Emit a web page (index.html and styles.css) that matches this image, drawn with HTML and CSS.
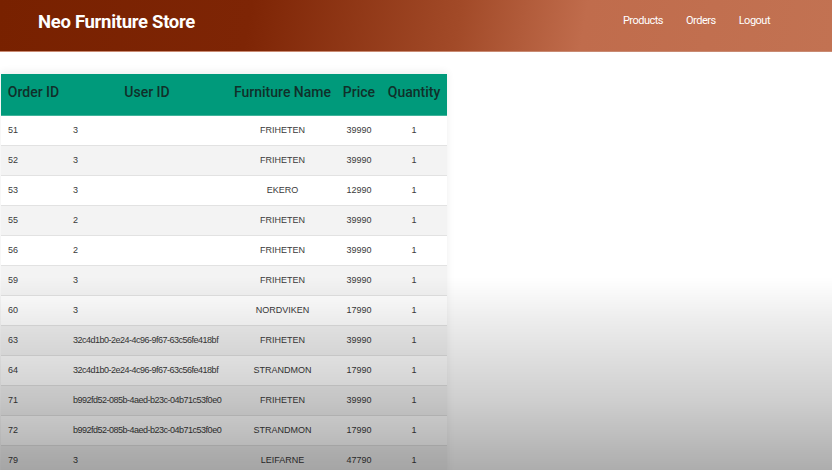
FILE: index.html
```html
<!DOCTYPE html>
<html lang="en">

<head>
	<meta charset="UTF-8">
	<title>Neo Furniture Store - Orders</title>
	<link rel="stylesheet" href="styles.css">
</head>

<body>
	<div class="navbar">
		<h1 class="brand">Neo Furniture Store</h1>
		<div class="nav_links">
			<a href="#" class="nav_link">Products</a>
			<a href="#" class="nav_link">Orders</a>
			<a href="#" class="nav_link">Logout</a>
		</div>
	</div>

	<table class="orders_table">
		<colgroup>
			<col class="col_order">
			<col class="col_user">
			<col class="col_name">
			<col class="col_price">
			<col class="col_qty">
		</colgroup>
		<thead>
			<tr>
				<th>Order ID</th>
				<th>User ID</th>
				<th>Furniture Name</th>
				<th>Price</th>
				<th>Quantity</th>
			</tr>
		</thead>
		<tbody>
			<tr><td class="left">51</td><td class="left">3</td><td>FRIHETEN</td><td>39990</td><td>1</td></tr>
			<tr><td class="left">52</td><td class="left">3</td><td>FRIHETEN</td><td>39990</td><td>1</td></tr>
			<tr><td class="left">53</td><td class="left">3</td><td>EKERO</td><td>12990</td><td>1</td></tr>
			<tr><td class="left">55</td><td class="left">2</td><td>FRIHETEN</td><td>39990</td><td>1</td></tr>
			<tr><td class="left">56</td><td class="left">2</td><td>FRIHETEN</td><td>39990</td><td>1</td></tr>
			<tr><td class="left">59</td><td class="left">3</td><td>FRIHETEN</td><td>39990</td><td>1</td></tr>
			<tr><td class="left">60</td><td class="left">3</td><td>NORDVIKEN</td><td>17990</td><td>1</td></tr>
			<tr><td class="left">63</td><td class="left uuid">32c4d1b0-2e24-4c96-9f67-63c56fe418bf</td><td>FRIHETEN</td><td>39990</td><td>1</td></tr>
			<tr><td class="left">64</td><td class="left uuid">32c4d1b0-2e24-4c96-9f67-63c56fe418bf</td><td>STRANDMON</td><td>17990</td><td>1</td></tr>
			<tr><td class="left">71</td><td class="left uuid">b992fd52-085b-4aed-b23c-04b71c53f0e0</td><td>FRIHETEN</td><td>39990</td><td>1</td></tr>
			<tr><td class="left">72</td><td class="left uuid">b992fd52-085b-4aed-b23c-04b71c53f0e0</td><td>STRANDMON</td><td>17990</td><td>1</td></tr>
			<tr><td class="left">79</td><td class="left">3</td><td>LEIFARNE</td><td>47790</td><td>1</td></tr>
		</tbody>
	</table>

	<div class="shade"></div>
</body>

</html>
```

FILE: styles.css
```css
* {
	box-sizing: border-box;
}

body {
	margin: 0;
	font-family: Roboto, "Liberation Sans", sans-serif;
	background-color: white;
}

.navbar {
	height: 52px;
	display: flex;
	align-items: flex-start;
	justify-content: space-between;
	padding: 0 62px 0 38px;
	background: linear-gradient(100deg, #782100 0%, #7e2505 30%, #a24a28 55%, #c06c4c 70%, #c27252 100%);
	border-bottom: 1px solid #c98a72;
}

.brand {
	margin: 11px 0 0 0;
	font-size: 18.5px;
	font-weight: 700;
	color: white;
	letter-spacing: -0.3px;
}

.nav_links {
	display: flex;
	gap: 23px;
	margin-top: 14px;
}

.nav_link {
	color: white;
	text-decoration: none;
	font-size: 11px;
	letter-spacing: -0.5px;
}

.orders_table {
	margin: 22px 0 0 1px;
	border-collapse: collapse;
	width: 446px;
	table-layout: fixed;
	box-shadow: 0 -2px 8px rgba(0, 0, 0, 0.07);
}

.col_order { width: 65px; }
.col_user { width: 162px; }
.col_name { width: 109px; }
.col_price { width: 44px; }
.col_qty { width: 66px; }

.orders_table th {
	height: 41px;
	background-color: #009a7b;
	color: #10302a;
	font-size: 14px;
	font-weight: 500;
	text-align: center;
	padding: 0 0 5px 0;
	white-space: nowrap;
	border-bottom: 1px solid #3fb39a;
}

.orders_table td {
	height: 30px;
	padding: 0 7px;
	font-family: "Liberation Sans", Arial, sans-serif;
	font-size: 9px;
	color: #3a3a3a;
	text-align: center;
	border-bottom: 1px solid #e2e2e2;
	white-space: nowrap;
}

.orders_table td.left {
	text-align: left;
}

.orders_table td.uuid {
	letter-spacing: -0.5px;
}

.orders_table tbody tr:nth-child(even) {
	background-color: #f3f3f3;
}

.shade {
	position: fixed;
	left: 0;
	top: 0;
	right: 0;
	bottom: 0;
	pointer-events: none;
	background: linear-gradient(to bottom, rgba(0, 0, 0, 0) 0%, rgba(0, 0, 0, 0) 59%, rgba(0, 0, 0, 0.07) 68%, rgba(0, 0, 0, 0.19) 85%, rgba(0, 0, 0, 0.32) 100%);
}
```
